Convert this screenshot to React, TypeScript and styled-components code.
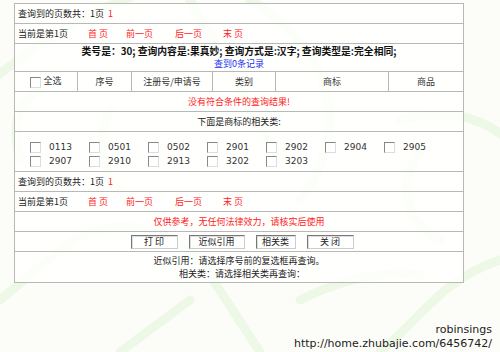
import React from 'react';
import styled, { createGlobalStyle } from 'styled-components';

const GlobalStyle = createGlobalStyle`
  html, body {
    margin: 0;
    padding: 0;
    background: #fcfdf9;
  }
  body {
    font-family: "Noto Sans CJK SC", "DejaVu Sans", sans-serif;
    font-size: 9px;
    color: #222;
  }
`;

const Page = styled.div`
  position: relative;
  width: 500px;
  height: 352px;
  overflow: hidden;
  padding: 3px 0 0 14px;
  box-sizing: border-box;
`;

const Watermark = styled.svg`
  position: absolute;
  left: 0;
  top: 0;
  width: 500px;
  height: 352px;
  pointer-events: none;
`;

const Sheet = styled.table`
  position: relative;
  width: 450px;
  border-collapse: collapse;
  background: rgba(255, 255, 255, 0.8);
  border: 1px solid #b4b4b4;
`;

const Cell = styled.td<{ align?: string; h?: number }>`
  border: 1px solid #b8b8b8;
  height: ${(p) => p.h ?? 19}px;
  padding: 0 3px;
  text-align: ${(p) => p.align ?? 'left'};
  line-height: 11px;
  white-space: nowrap;
  vertical-align: middle;
`;

const HeadCell = styled(Cell)`
  text-align: center;
  color: #333;
`;

const Red = styled.span`
  color: #ff2222;
`;

const PagerLink = styled.span<{ gap: number }>`
  color: #ff2222;
  margin-left: ${(p) => p.gap}px;
`;

const Summary = styled.div`
  font-family: "Noto Sans CJK SC", serif;
  font-size: 9.8px;
  font-weight: bold;
  color: #111;
`;

const Blue = styled.div`
  color: #2233ee;
  margin-top: 1px;
`;

const Box = styled.span`
  display: inline-block;
  width: 9px;
  height: 9px;
  border: 1px solid #888;
  border-right-color: #ddd;
  border-bottom-color: #ddd;
  background: #fff;
  vertical-align: middle;
  margin-right: 2px;
`;

const ClassGrid = styled.div`
  display: grid;
  grid-template-columns: repeat(7, 59px);
  row-gap: 2px;
  padding: 9px 0 4px 12px;
`;

const ClassItem = styled.label`
  display: flex;
  align-items: center;
  gap: 6px;
  font-family: "DejaVu Sans", sans-serif;
  font-size: 9px;
  color: #333;
  height: 12px;
`;

const ButtonRow = styled.div`
  display: flex;
  justify-content: center;
  gap: 11px;
  padding-left: 6px;
`;

const Btn = styled.button<{ w: number }>`
  width: ${(p) => p.w}px;
  height: 14px;
  padding: 0;
  font-family: "Noto Sans CJK SC", sans-serif;
  font-size: 9px;
  line-height: 11px;
  color: #222;
  background: #fff;
  border: 1px solid #777;
  border-right-color: #ccc;
  border-bottom-color: #ccc;
  box-shadow: inset 1px 1px 0 #ddd;
`;

const Notes = styled.div`
  text-align: center;
  line-height: 13px;
  padding: 2px 0;
`;

const Credit = styled.div`
  position: absolute;
  right: 8px;
  bottom: 1px;
  text-align: right;
  font-family: "DejaVu Sans", sans-serif;
  font-size: 11px;
  line-height: 14px;
  color: #222;
`;

const classes = ['0113', '0501', '0502', '2901', '2902', '2904', '2905', '2907', '2910', '2913', '3202', '3203'];

const PagerRows = () => (
  <>
    <tr>
      <Cell colSpan={6}>查询到的页数共：1页 &nbsp;<Red>1</Red></Cell>
    </tr>
    <tr>
      <Cell colSpan={6}>
        当前是第1页
        <PagerLink gap={20}>首 页</PagerLink>
        <PagerLink gap={18}>前一页</PagerLink>
        <PagerLink gap={22}>后一页</PagerLink>
        <PagerLink gap={21}>末 页</PagerLink>
      </Cell>
    </tr>
  </>
);

export default function App() {
  return (
    <>
      <GlobalStyle />
      <Page>
        <Watermark viewBox="0 0 500 352">
          <g fill="none" stroke="#eef8e6" strokeWidth="9" strokeLinecap="round">
            <path d="M-20 90 C40 40 90 10 150 -10" />
            <path d="M20 160 C10 120 20 100 40 90" />
            <path d="M110 110 C95 140 100 170 120 190" />
            <path d="M190 0 L280 160" />
            <path d="M250 0 C320 40 360 120 300 200" />
            <path d="M400 120 C440 110 480 110 520 150" />
            <path d="M420 150 C400 180 400 220 440 240" />
            <path d="M0 300 L60 250 C100 220 150 215 200 260 L260 352" />
            <path d="M120 352 L190 300" />
            <path d="M380 352 C420 320 440 280 500 260" />
            <path d="M300 300 C340 280 380 270 420 275" />
          </g>
        </Watermark>
        <Sheet>
          <tbody>
            <PagerRows />
            <tr>
              <Cell colSpan={6} align="center" h={27}>
                <Summary>类号是：30; 查询内容是:果真妙; 查询方式是:汉字; 查询类型是:完全相同;</Summary>
                <Blue>查到0条记录</Blue>
              </Cell>
            </tr>
            <tr>
              <HeadCell style={{ width: 56 }}>
                <Box />全选
              </HeadCell>
              <HeadCell style={{ width: 47 }}>序号</HeadCell>
              <HeadCell style={{ width: 74 }}>注册号/申请号</HeadCell>
              <HeadCell style={{ width: 56 }}>类别</HeadCell>
              <HeadCell style={{ width: 106 }}>商标</HeadCell>
              <HeadCell>商品</HeadCell>
            </tr>
            <tr>
              <Cell colSpan={6} align="center">
                <Red>没有符合条件的查询结果!</Red>
              </Cell>
            </tr>
            <tr>
              <Cell colSpan={6} align="center">下面是商标的相关类:</Cell>
            </tr>
            <tr>
              <Cell colSpan={6} h={36}>
                <ClassGrid>
                  {classes.map((c) => (
                    <ClassItem key={c}>
                      <Box />
                      {c}
                    </ClassItem>
                  ))}
                </ClassGrid>
              </Cell>
            </tr>
            <PagerRows />
            <tr>
              <Cell colSpan={6} align="center">
                <Red>仅供参考，无任何法律效力，请核实后使用</Red>
              </Cell>
            </tr>
            <tr>
              <Cell colSpan={6}>
                <ButtonRow>
                  <Btn w={47}>打 印</Btn>
                  <Btn w={56}>近似引用</Btn>
                  <Btn w={40}>相关类</Btn>
                  <Btn w={47}>关 闭</Btn>
                </ButtonRow>
              </Cell>
            </tr>
            <tr>
              <Cell colSpan={6} h={27}>
                <Notes>
                  <div>近似引用：请选择序号前的复选框再查询。</div>
                  <div>&nbsp;&nbsp;&nbsp;相关类：请选择相关类再查询：</div>
                </Notes>
              </Cell>
            </tr>
          </tbody>
        </Sheet>
        <Credit>
          robinsings
          <br />
          http://home.zhubajie.com/6456742/
        </Credit>
      </Page>
    </>
  );
}
